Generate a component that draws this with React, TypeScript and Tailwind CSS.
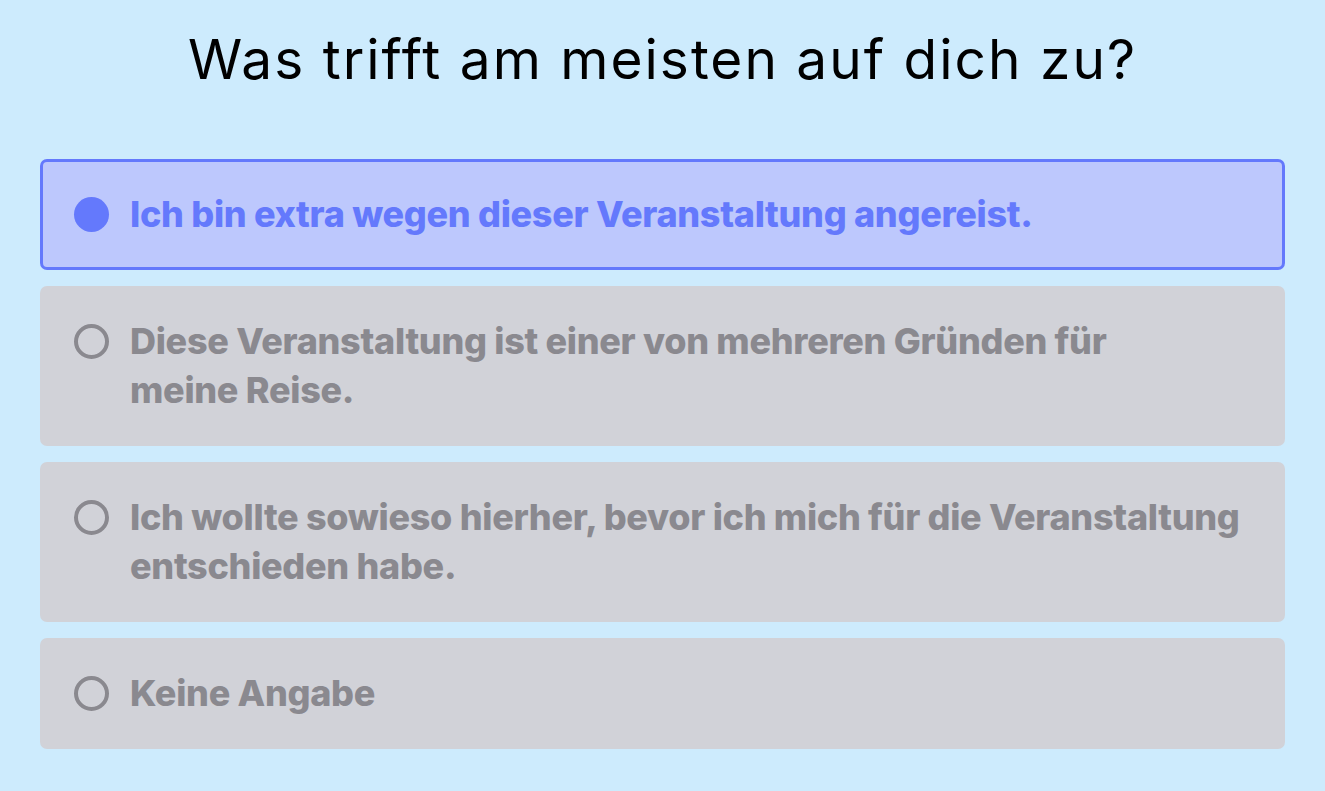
type Option = {
  id: string;
  lines: string[];
};

const options: Option[] = [
  { id: "extra", lines: ["Ich bin extra wegen dieser Veranstaltung angereist."] },
  {
    id: "one-of-many",
    lines: ["Diese Veranstaltung ist einer von mehreren Gründen für", "meine Reise."],
  },
  {
    id: "anyway",
    lines: [
      "Ich wollte sowieso hierher, bevor ich mich für die Veranstaltung",
      "entschieden habe.",
    ],
  },
  { id: "none", lines: ["Keine Angabe"] },
];

function RadioDot({ checked }: { checked: boolean }) {
  return (
    <span className="flex h-[49px] shrink-0 items-center">
      {checked ? (
        <span className="block h-[35px] w-[35px] rounded-full bg-[#6479fc]" />
      ) : (
        <span className="block h-[35px] w-[35px] rounded-full border-[4px] border-[#8a898f]" />
      )}
    </span>
  );
}

export default function App() {
  const selected = "extra";

  return (
    <div
      className="min-h-[791px] bg-[#cdebfd] px-[40px] pt-[32px]"
      style={{ fontFamily: "Inter, 'Noto Sans', sans-serif" }}
    >
      <h1 className="text-center text-[55px] font-normal leading-none tracking-[2px] text-black">
        Was trifft am meisten auf dich zu?
      </h1>

      <div className="mt-[72px] flex flex-col gap-[16px]">
        {options.map((opt) => {
          const active = opt.id === selected;
          return (
            <div
              key={opt.id}
              className={
                active
                  ? "flex items-start gap-[21px] rounded-[7px] border-[3px] border-[#6479fc] bg-[#bdc8fd] py-[28px] pl-[31px] pr-[16px]"
                  : "flex items-start gap-[21px] rounded-[7px] border-[3px] border-transparent bg-[#d1d2d8] py-[28px] pl-[31px] pr-[16px]"
              }
            >
              <RadioDot checked={active} />
              <div
                className={
                  active
                    ? "whitespace-nowrap text-[36px] font-extrabold leading-[49px] tracking-[-0.3px] text-[#6479fc]"
                    : "whitespace-nowrap text-[36px] font-extrabold leading-[49px] tracking-[-0.3px] text-[#8a898f]"
                }
              >
                {opt.lines.map((line, i) => (
                  <div key={i}>{line}</div>
                ))}
              </div>
            </div>
          );
        })}
      </div>
    </div>
  );
}
